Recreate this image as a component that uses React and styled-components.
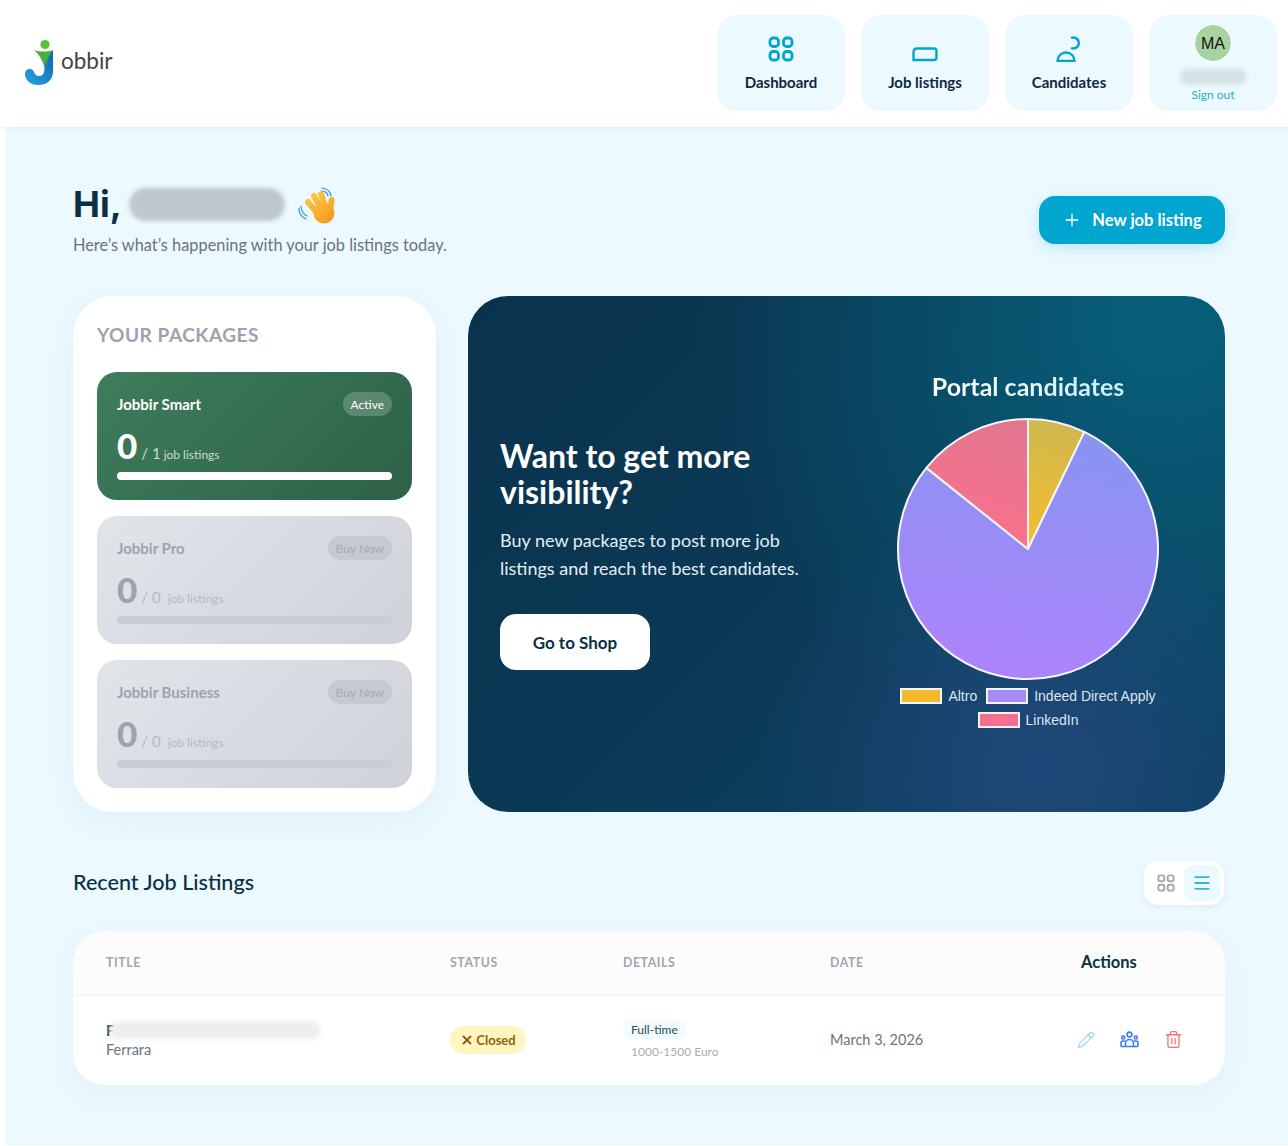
import React from 'react';
import styled, { createGlobalStyle } from 'styled-components';
import { Plus, Menu, Pencil, Trash2, X } from 'lucide-react';

const GlobalStyle = createGlobalStyle`
  html, body { margin: 0; padding: 0; background: #fff; }
  body { font-family: Lato, "Open Sans", sans-serif; color: #0a2f45; }
  * { box-sizing: border-box; }
`;

const Header = styled.header`
  position: relative;
  height: 127px;
  display: flex;
  align-items: center;
  justify-content: space-between;
  padding: 0 11px 0 24px;
  background: #fff;
  box-shadow: 0 1px 3px rgba(10, 50, 70, 0.07);
`;

const Logo = styled.div`
  display: flex;
  align-items: center;
  padding-bottom: 2px;
`;

const LogoText = styled.span`
  margin: 0 0 4px 5px;
  font-size: 22.5px;
  color: #414448;
`;

const Nav = styled.nav`
  display: flex;
  gap: 16px;
  align-self: flex-start;
  margin-top: 15px;
`;

const NavCard = styled.a`
  width: 128px;
  height: 96px;
  border-radius: 20px;
  background: #ecf9ff;
  display: flex;
  flex-direction: column;
  align-items: center;
  padding-top: 21px;
  color: #00a5d0;
`;

const NavLabel = styled.span`
  margin-top: 11px;
  font-size: 15px;
  font-weight: 700;
  color: #0c2a3d;
`;

const Avatar = styled.div`
  width: 36px;
  height: 36px;
  margin: -11px 0 8px;
  padding-top: 1px;
  border-radius: 50%;
  background: #a7d3a0;
  outline: 1px solid #fff;
  display: flex;
  align-items: center;
  justify-content: center;
  font: 16px "Liberation Sans", sans-serif;
  color: #111;
`;

const Blur = styled.div`
  flex: none;
  width: ${p => p.$w}px;
  height: ${p => p.$h}px;
  background: ${p => p.$c};
  border-radius: 99px;
  filter: blur(2px);
`;

const TitleBlur = styled(Blur)`
  position: absolute;
  left: 3px;
  top: 1px;
`;

const SignOut = styled.span`
  font-size: 12px;
  color: #2aa9d2;
  margin-top: 2px;
`;

const Main = styled.main`
  margin-left: 5px;
  height: 1018px;
  padding: 59px 63px 0 68px;
  background: #ecf9ff;
`;

const Welcome = styled.section`
  display: flex;
  justify-content: space-between;
  align-items: center;
  height: 68px;
  margin-bottom: 42px;
`;

const Greeting = styled.div`
  align-self: flex-start;
`;

const HiRow = styled.div`
  display: flex;
  align-items: center;
  height: 36px;
`;

const Hi = styled.h1`
  margin: 0 7px 0 0;
  font: 700 36px Inter, sans-serif;
  color: #0a2f45;
`;

const HandWrap = styled.span`
  display: flex;
  margin: 3px 0 0 13px;
`;

const Sub = styled.p`
  margin: 13px 0 0;
  font-size: 16.35px;
  color: #6b7280;
`;

const NewButton = styled.button`
  width: 186px;
  height: 48px;
  border: 0;
  border-radius: 16px;
  background: #00a5d0;
  color: #fff;
  display: flex;
  align-items: center;
  justify-content: center;
  gap: 10px;
  font: 700 16.5px Lato, sans-serif;
  box-shadow: 0 4px 14px rgba(0, 165, 208, 0.2);
`;

const Grid = styled.section`
  display: grid;
  grid-template-columns: 363px 1fr;
  gap: 32px;
  height: 516px;
`;

const Packages = styled.div`
  padding: 24px;
  border-radius: 40px;
  background: #fff;
  box-shadow: 0 10px 30px rgba(30, 120, 160, 0.06);
`;

const PackagesTitle = styled.h2`
  margin: 4px 0 20px;
  height: 28px;
  font: 700 19px/22px Lato, sans-serif;
  letter-spacing: 0.55px;
  color: #9ca3af;
`;

const PackageList = styled.div`
  display: flex;
  flex-direction: column;
  gap: 16px;
`;

const Package = styled.div`
  height: 128px;
  padding: 20px;
  border-radius: 20px;
  background: ${p => p.$active
    ? 'linear-gradient(135deg, #3e7d5b, #2d6148)'
    : 'linear-gradient(135deg, #e1e4e9, #cfd2d9)'};
  color: ${p => p.$active ? '#fff' : '#9ca3af'};
`;

const PackageTop = styled.div`
  display: flex;
  justify-content: space-between;
  align-items: center;
  height: 24px;
  font-size: 15px;
  font-weight: 700;
`;

const Pill = styled.span`
  height: 24px;
  padding: 0 8px;
  border-radius: 12px;
  display: flex;
  align-items: center;
  font-size: 12px;
  font-weight: 400;
  background: ${p => p.$active ? 'rgba(255,255,255,0.2)' : '#c5c9d1'};
  color: ${p => p.$active ? '#fff' : '#a6abb5'};
`;

const Count = styled.div`
  display: flex;
  align-items: baseline;
  height: 32px;
  margin-top: 13px;
  font-size: 15px;
  color: ${p => p.$active ? 'rgba(255,255,255,0.75)' : '#b4b8c1'};
`;

const Big = styled.span`
  font: 900 35px/32px Lato, sans-serif;
  margin-right: 4px;
  color: ${p => p.$active ? '#fff' : '#9ca3af'};
`;

const Small = styled.span`
  font-size: 12px;
  margin-left: ${p => p.$active ? 3 : 7}px;
`;

const Bar = styled.div`
  height: 8px;
  margin-top: 11px;
  border-radius: 4px;
  background: ${p => p.$active ? '#fff' : '#c9ccd4'};
`;

const Promo = styled.div`
  border-radius: 40px;
  padding: 0 32px;
  display: flex;
  color: #fff;
  background:
    radial-gradient(circle at 75% 92%, rgba(35, 72, 125, 0.9), transparent 38%),
    radial-gradient(circle at 92% 5%, rgba(7, 98, 125, 0.95), transparent 55%),
    linear-gradient(135deg, #0a324c, #0b4261);
`;

const PromoText = styled.div`
  width: 320px;
  padding-top: 142px;
`;

const PromoTitle = styled.h2`
  margin: 0 0 16px;
  font: 700 32px/36px Lato, sans-serif;
`;

const PromoBody = styled.p`
  margin: 0 0 32px;
  font-size: 18px;
  line-height: 28px;
  color: #e4eef5;
`;

const ShopButton = styled.button`
  width: 150px;
  height: 56px;
  border: 0;
  border-radius: 16px;
  background: #fff;
  color: #0a2f45;
  font: 700 17px Lato, sans-serif;
`;

const Chart = styled.div`
  margin-left: auto;
  margin-right: 33px;
  padding-top: 75px;
  width: 264px;
  display: flex;
  flex-direction: column;
  align-items: center;
`;

const ChartTitle = styled.h3`
  margin: 0 0 16px;
  height: 30px;
  font: 700 25px/30px Lato, sans-serif;
  white-space: nowrap;
  background: linear-gradient(90deg, #fff, #c6eef7);
  -webkit-background-clip: text;
  background-clip: text;
  color: transparent;
`;

const Legend = styled.div`
  width: 300px;
  flex: none;
  display: flex;
  flex-wrap: wrap;
  justify-content: center;
  column-gap: 9px;
  margin-top: 3px;
  font: 14px/24px "Liberation Sans", sans-serif;
  color: #dde5f0;
`;

const LegendItem = styled.span`
  display: flex;
  align-items: center;
  gap: 6px;
`;

const Swatch = styled.i`
  width: 42px;
  height: 16px;
  border: 2px solid #f2f4fa;
  background: ${p => p.$c};
`;

const ListHead = styled.div`
  display: flex;
  justify-content: space-between;
  align-items: center;
  height: 44px;
  margin: 49px 1px 26px 0;
`;

const ListTitle = styled.h2`
  margin: 0 0 2px;
  font: 500 21.6px Lato, sans-serif;
  color: #0a2f45;
`;

const Toggle = styled.div`
  width: 80px;
  height: 44px;
  padding: 4px;
  border-radius: 14px;
  background: #fff;
  display: flex;
  box-shadow: 0 2px 6px rgba(30, 120, 160, 0.08);
`;

const ToggleBtn = styled.div`
  width: 36px;
  height: 36px;
  border-radius: 10px;
  display: flex;
  align-items: center;
  justify-content: center;
  background: ${p => p.$on ? '#ecf9ff' : 'transparent'};
  color: ${p => p.$on ? '#2fb8dd' : '#a3a8b3'};
`;

const Table = styled.div`
  height: 154px;
  border-radius: 32px;
  overflow: hidden;
  background: #fff;
  box-shadow: 0 10px 30px rgba(30, 120, 160, 0.05);
`;

const Row = styled.div`
  display: grid;
  grid-template-columns: 344px 173px 207px 220px 1fr;
  align-items: center;
  padding: 0 0 2px 33px;
  height: ${p => p.$h}px;
  background: ${p => p.$head ? '#fcfcfc' : '#fff'};
  border-bottom: ${p => p.$head ? '1px solid #f0f2f4' : 'none'};
`;

const Th = styled.span`
  font-size: 12.3px;
  font-weight: 700;
  letter-spacing: 0.6px;
  color: #a0a5b0;
`;

const ThActions = styled.span`
  padding-left: 31px;
  font-size: 16.5px;
  font-weight: 700;
  color: #0a2f45;
`;

const TitleCell = styled.div`
  display: flex;
  flex-direction: column;
  gap: 2px;
  font-size: 14.5px;
  color: #6b7280;
`;

const TitleLine = styled.div`
  position: relative;
  height: 18px;
  font-size: 15px;
  line-height: 18px;
  font-weight: 700;
  color: #0a2f45;
`;

const Closed = styled.span`
  width: 76px;
  height: 28px;
  border-radius: 14px;
  background: #fef5c0;
  color: #97600f;
  display: flex;
  align-items: center;
  justify-content: center;
  gap: 2px;
  font-size: 13px;
  font-weight: 700;
`;

const DetailsCell = styled.div`
  padding-bottom: 2px;
`;

const TypeTag = styled.span`
  display: inline-block;
  padding: 2px 8px;
  border-radius: 8px;
  background: #f3fbfe;
  font-size: 12px;
  color: #2c4a5c;
`;

const Salary = styled.div`
  margin: 5px 0 0 8px;
  font-size: 12px;
  color: #a9adb7;
`;

const DateCell = styled.span`
  font-size: 14.5px;
  color: #6b7280;
`;

const Actions = styled.div`
  display: flex;
  align-items: center;
  gap: 25px;
  padding-left: 27px;
`;

function LogoMark() {
  return (
    <svg width="32" height="48" viewBox="0 0 32 48">
      <defs>
        <linearGradient id="jblue" x1="0" y1="1" x2="1" y2="0">
          <stop offset="0" stopColor="#25a3e0" />
          <stop offset="1" stopColor="#0f66ad" />
        </linearGradient>
      </defs>
      <circle cx="21" cy="5.5" r="4.6" fill="#5cc03c" />
      <path d="M10 11 C15 13 24 13 29 11 L21 30 C19 22 15 15 10 11Z" fill="#46b03f" />
      <path d="M29 11 V32 C29 42 22 46 14 46 C6 46 1 41 1 35 C1 31 4 30 6 30 C9 30 10 33 11 35 C13 38 19 38 20 33 L21 26 C23 21 26 15 29 11Z" fill="url(#jblue)" />
    </svg>
  );
}

function WaveHand() {
  return (
    <svg width="40" height="38" viewBox="0 0 40 38">
      <defs>
        <linearGradient id="hand" gradientUnits="userSpaceOnUse" x1="10" y1="6" x2="32" y2="36">
          <stop offset="0" stopColor="#ffc94a" />
          <stop offset="1" stopColor="#f59a1c" />
        </linearGradient>
      </defs>
      <g fill="none" stroke="#2f8fd8" strokeWidth="1.2" strokeLinecap="round">
        <path d="M3 19 Q3 26 9 29" />
        <path d="M0.8 21 Q1 29 8 32" />
        <path d="M24 1 Q32 2 33 9" />
        <path d="M23 4 Q29 4 30 9" />
      </g>
      <g fill="none" stroke="url(#hand)" strokeWidth="6" strokeLinecap="round">
        <path d="M10 15 L20 27" />
        <path d="M16 9 L24 24" />
        <path d="M23 7 L28 22" />
        <path d="M33.5 13 L32 24" />
      </g>
      <circle cx="26" cy="26" r="10.5" fill="url(#hand)" />
    </svg>
  );
}

function GridIcon({ size = 26, r = 3, w = 2.8 }) {
  return (
    <svg width={size} height={size} viewBox="0 0 26 26" fill="none" stroke="currentColor" strokeWidth={w}>
      <rect x="2" y="2" width="8.5" height="8.5" rx={r} />
      <rect x="15.5" y="2" width="8.5" height="8.5" rx={r} />
      <rect x="2" y="15.5" width="8.5" height="8.5" rx={r} />
      <rect x="15.5" y="15.5" width="8.5" height="8.5" rx={r} />
    </svg>
  );
}

function ListingIcon() {
  return (
    <svg width="26" height="26" viewBox="0 0 26 26" fill="none" stroke="currentColor" strokeWidth="2.4">
      <path d="M1.5 24 V16.5 Q1.5 12.5 5 12.5 H22 Q24.5 12.5 24.5 15 V21.5 Q24.5 24 22 24 Z" />
    </svg>
  );
}

function CandidateIcon() {
  return (
    <svg width="26" height="26" viewBox="0 0 26 26" fill="none" stroke="currentColor" strokeWidth="2.4">
      <path d="M15 2 A5.5 5.5 0 1 1 15 12" />
      <path d="M1.5 25 A8.5 8.5 0 0 1 18.5 25 Z" />
    </svg>
  );
}

function TeamIcon() {
  return (
    <svg width="19" height="17" viewBox="0 0 19 17" fill="none" stroke="#3d7cf5" strokeWidth="1.6">
      <circle cx="9.5" cy="3.5" r="2.4" />
      <circle cx="3.2" cy="6.5" r="1.5" />
      <circle cx="15.8" cy="6.5" r="1.5" />
      <path d="M5.5 15.5 V12.5 A4 4 0 0 1 13.5 12.5 V15.5" />
      <path d="M1 15.5 V12 Q1 10 3 10 H5 M18 15.5 V12 Q18 10 16 10 H14 M1 15.5 H18" />
    </svg>
  );
}

// angles measured clockwise from the top of the pie
function slice(from, to, r = 130) {
  const pt = a => {
    const rad = (a * Math.PI) / 180;
    return `${(130 + r * Math.sin(rad)).toFixed(2)} ${(130 - r * Math.cos(rad)).toFixed(2)}`;
  };
  return `M130 130 L${pt(from)} A${r} ${r} 0 ${to - from > 180 ? 1 : 0} 1 ${pt(to)} Z`;
}

function PieChart() {
  const parts = [
    { id: 'altro', from: 0, to: 25.7, top: '#d0b84f', bottom: '#f5be2a' },
    { id: 'indeed', from: 25.7, to: 308.6, top: '#8795f0', bottom: '#aa84fb' },
    { id: 'linkedin', from: 308.6, to: 360, top: '#df778f', bottom: '#fb708c' },
  ];
  return (
    <svg width="264" height="264" viewBox="-2 -2 264 264">
      <defs>
        {parts.map(p => (
          <linearGradient key={p.id} id={p.id} gradientUnits="userSpaceOnUse" x1="150" y1="0" x2="110" y2={p.id === 'indeed' ? 240 : 130}>
            <stop offset="0" stopColor={p.top} />
            <stop offset="1" stopColor={p.bottom} />
          </linearGradient>
        ))}
      </defs>
      {parts.map(p => (
        <path key={p.id} d={slice(p.from, p.to)} fill={`url(#${p.id})`} stroke="#f4f6fb" strokeWidth="2" strokeLinejoin="round" />
      ))}
    </svg>
  );
}

function PackageCard({ name, total, active }) {
  return (
    <Package $active={active}>
      <PackageTop>
        {name}
        <Pill $active={active}>{active ? 'Active' : 'Buy Now'}</Pill>
      </PackageTop>
      <Count $active={active}>
        <Big $active={active}>0</Big> / {total} <Small $active={active}>job listings</Small>
      </Count>
      <Bar $active={active} />
    </Package>
  );
}

export default function App() {
  return (
    <>
      <GlobalStyle />
      <Header>
        <Logo><LogoMark /><LogoText>obbir</LogoText></Logo>
        <Nav>
          <NavCard><GridIcon /><NavLabel>Dashboard</NavLabel></NavCard>
          <NavCard><ListingIcon /><NavLabel>Job listings</NavLabel></NavCard>
          <NavCard><CandidateIcon /><NavLabel>Candidates</NavLabel></NavCard>
          <NavCard>
            <Avatar>MA</Avatar>
            <Blur $w={66} $h={16} $c="#d5e2e6" />
            <SignOut>Sign out</SignOut>
          </NavCard>
        </Nav>
      </Header>
      <Main>
        <Welcome>
          <Greeting>
            <HiRow>
              <Hi>Hi,</Hi>
              <Blur $w={156} $h={33} $c="#bcc8cc" />
              <HandWrap><WaveHand /></HandWrap>
            </HiRow>
            <Sub>Here’s what’s happening with your job listings today.</Sub>
          </Greeting>
          <NewButton><Plus size={20} strokeWidth={1.6} />New job listing</NewButton>
        </Welcome>
        <Grid>
          <Packages>
            <PackagesTitle>YOUR PACKAGES</PackagesTitle>
            <PackageList>
              <PackageCard name="Jobbir Smart" total={1} active />
              <PackageCard name="Jobbir Pro" total={0} />
              <PackageCard name="Jobbir Business" total={0} />
            </PackageList>
          </Packages>
          <Promo>
            <PromoText>
              <PromoTitle>Want to get more visibility?</PromoTitle>
              <PromoBody>Buy new packages to post more job listings and reach the best candidates.</PromoBody>
              <ShopButton>Go to Shop</ShopButton>
            </PromoText>
            <Chart>
              <ChartTitle>Portal candidates</ChartTitle>
              <PieChart />
              <Legend>
                <LegendItem><Swatch $c="#f5b82a" />Altro</LegendItem>
                <LegendItem><Swatch $c="#a78bfa" />Indeed Direct Apply</LegendItem>
                <LegendItem><Swatch $c="#f56f92" />LinkedIn</LegendItem>
              </Legend>
            </Chart>
          </Promo>
        </Grid>
        <ListHead>
          <ListTitle>Recent Job Listings</ListTitle>
          <Toggle>
            <ToggleBtn><GridIcon size={18} r={2.5} w={2.8} /></ToggleBtn>
            <ToggleBtn $on><Menu size={20} strokeWidth={2.2} /></ToggleBtn>
          </Toggle>
        </ListHead>
        <Table>
          <Row $head $h={65}>
            <Th>TITLE</Th><Th>STATUS</Th><Th>DETAILS</Th><Th>DATE</Th><ThActions>Actions</ThActions>
          </Row>
          <Row $h={89}>
            <TitleCell>
              <TitleLine>
                F
                <TitleBlur $w={212} $h={17} $c="#eceeef" />
              </TitleLine>
              Ferrara
            </TitleCell>
            <Closed><X size={14} strokeWidth={3.4} />Closed</Closed>
            <DetailsCell>
              <TypeTag>Full-time</TypeTag>
              <Salary>1000-1500 Euro</Salary>
            </DetailsCell>
            <DateCell>March 3, 2026</DateCell>
            <Actions>
              <Pencil size={18} color="#8bd7ee" strokeWidth={1.5} />
              <TeamIcon />
              <Trash2 size={19} color="#f87171" strokeWidth={1.7} />
            </Actions>
          </Row>
        </Table>
      </Main>
    </>
  );
}
